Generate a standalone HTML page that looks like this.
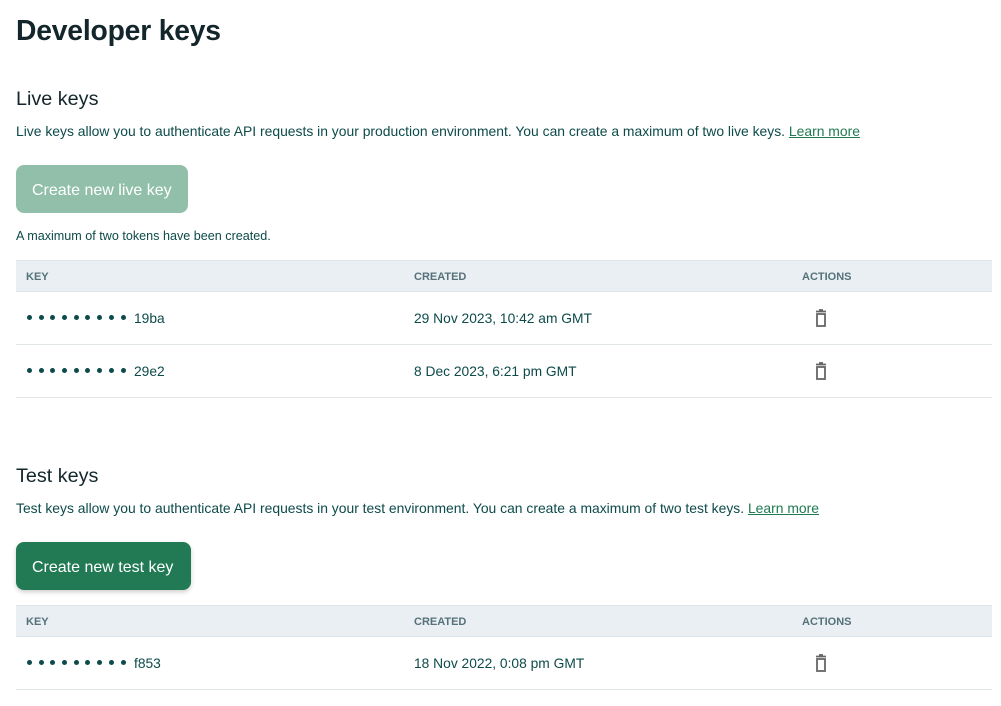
<!DOCTYPE html>
<html><head><style>
*{margin:0;padding:0;box-sizing:border-box}
body{width:1001px;height:706px;background:#fff;font-family:"Liberation Sans",sans-serif;color:#0d4a4a;overflow:hidden;position:relative}
h1{position:absolute;left:16px;top:14px;font-size:28.3px;font-weight:bold;color:#13262b;letter-spacing:-0.2px}
h2{position:absolute;left:16px;font-size:19.8px;font-weight:normal;color:#13262b}
p{position:absolute;left:16px;font-size:13.9px;color:#0d4a4a;white-space:nowrap}
p u{color:#1f7a52}
.btn{position:absolute;left:16px;height:48px;border-radius:8px;color:#fff;font-size:16px;line-height:52px;padding-left:16px}
.tbl{position:absolute;left:16px;width:976px}
.hd{height:32px;background:#eaeff3;border-top:1px solid #dde4ea;border-bottom:1px solid #dde4ea;position:relative;font-size:11px;font-weight:bold;color:#55717a}
.hd span,.row span{position:absolute}
.row{height:53px;border-bottom:1px solid #e0e5e8;position:relative;font-size:13.8px;color:#0d4a4a}
.dots{position:absolute;left:11px;top:23px;display:flex;gap:6.7px}
.dots i{width:5px;height:5px;border-radius:50%;background:#0d4a4a;display:block}
.tr{position:absolute;left:797px;top:16px}
</style></head><body>
<h1>Developer keys</h1>
<h2 style="top:88px">Live keys</h2>
<p style="top:123px">Live keys allow you to authenticate API requests in your production environment. You can create a maximum of two live keys. <u>Learn more</u></p>
<div class="btn" style="top:165px;width:172px;background:#91bfaa">Create new live key</div>
<p style="top:229px;font-size:12.6px">A maximum of two tokens have been created.</p>

<div class="tbl" style="top:260px">
<div class="hd"><span style="left:10px;top:10px">KEY</span><span style="left:398px;top:10px">CREATED</span><span style="left:786px;top:10px">ACTIONS</span></div>
<div class="row"><div class="dots"><i></i><i></i><i></i><i></i><i></i><i></i><i></i><i></i><i></i></div><span style="left:118px;top:19px">19ba</span><span style="left:398px;top:19px">29 Nov 2023, 10:42 am GMT</span><svg class="tr" width="16" height="20" viewBox="0 0 16 20"><path d="M3 3.5h10M6 2h4" stroke="#666" stroke-width="1.8" fill="none"/><rect x="4" y="6" width="8" height="12" fill="none" stroke="#666" stroke-width="1.8"/></svg></div>
<div class="row"><div class="dots"><i></i><i></i><i></i><i></i><i></i><i></i><i></i><i></i><i></i></div><span style="left:118px;top:19px">29e2</span><span style="left:398px;top:19px">8 Dec 2023, 6:21 pm GMT</span><svg class="tr" width="16" height="20" viewBox="0 0 16 20"><path d="M3 3.5h10M6 2h4" stroke="#666" stroke-width="1.8" fill="none"/><rect x="4" y="6" width="8" height="12" fill="none" stroke="#666" stroke-width="1.8"/></svg></div>
</div>

<h2 style="top:465px">Test keys</h2>
<p style="top:500px">Test keys allow you to authenticate API requests in your test environment. You can create a maximum of two test keys. <u>Learn more</u></p>
<div class="btn" style="top:542px;width:175px;background:#217a53;box-shadow:0 2px 5px rgba(0,0,0,.2)">Create new test key</div>

<div class="tbl" style="top:605px">
<div class="hd"><span style="left:10px;top:10px">KEY</span><span style="left:398px;top:10px">CREATED</span><span style="left:786px;top:10px">ACTIONS</span></div>
<div class="row"><div class="dots"><i></i><i></i><i></i><i></i><i></i><i></i><i></i><i></i><i></i></div><span style="left:118px;top:19px">f853</span><span style="left:398px;top:19px">18 Nov 2022, 0:08 pm GMT</span><svg class="tr" width="16" height="20" viewBox="0 0 16 20"><path d="M3 3.5h10M6 2h4" stroke="#666" stroke-width="1.8" fill="none"/><rect x="4" y="6" width="8" height="12" fill="none" stroke="#666" stroke-width="1.8"/></svg></div>
</div>
</body></html>
